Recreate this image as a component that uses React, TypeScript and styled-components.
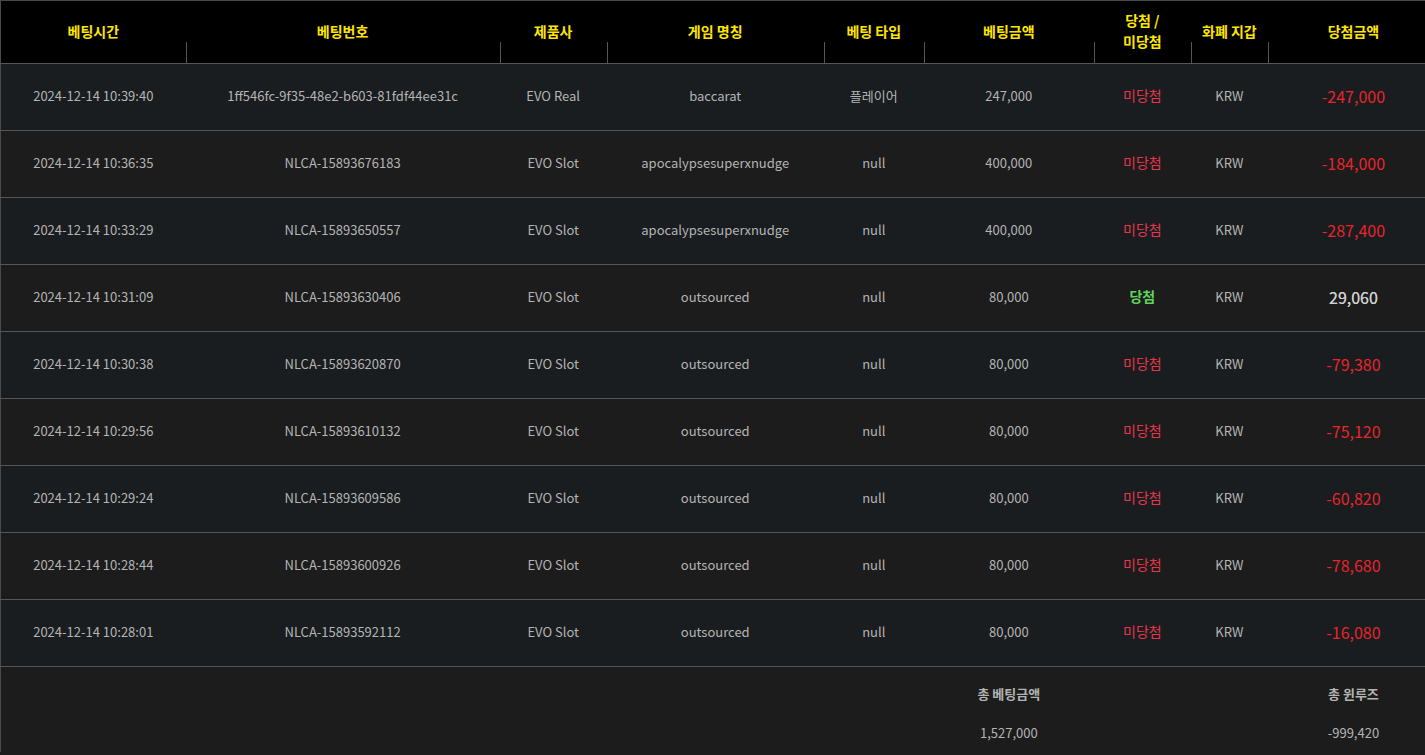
import React from "react";
import styled, { createGlobalStyle } from "styled-components";

const Global = createGlobalStyle`
  html, body { margin: 0; padding: 0; background: #1c1c1c; overflow-x: hidden; }
  body { font-family: "Noto Sans CJK KR", "Noto Sans", sans-serif; }
`;

const Table = styled.table`
  width: 1439px;
  border-collapse: collapse;
  table-layout: fixed;
  border-top: 1px solid #4a4a4a;
  border-left: 1px solid #4a4a4a;
  font-family: "Noto Sans CJK KR", "Noto Sans", sans-serif;
`;

const HeadRow = styled.tr`
  background: #000;
  border-bottom: 1px solid #555;
`;

const Th = styled.th<{ $sep?: boolean }>`
  position: relative;
  height: 60px;
  padding: 0 4px 2px;
  color: #ffe600;
  font-size: 14px;
  font-weight: 700;
  line-height: 21px;
  text-align: center;
  vertical-align: middle;
  &::after {
    content: "";
    display: ${(p) => (p.$sep ? "block" : "none")};
    position: absolute;
    left: 0;
    bottom: 0;
    width: 1px;
    height: 21px;
    background: #555;
  }
`;

const Row = styled.tr<{ $alt: boolean }>`
  background: ${(p) => (p.$alt ? "#1c1c1c" : "#1a1d1f")};
  border-bottom: 1px solid #555;
`;

const Td = styled.td`
  height: 62px;
  padding: 0 0 4px;
  color: #b4b4b4;
  font-size: 13px;
  text-align: center;
  vertical-align: middle;
  white-space: nowrap;
`;

const Result = styled.span<{ $win: boolean }>`
  font-size: 14px;
  font-weight: ${(p) => (p.$win ? 700 : 400)};
  color: ${(p) => (p.$win ? "#5fd35f" : "#e5364c")};
`;

const Amount = styled.span<{ $neg: boolean }>`
  display: inline-block;
  padding-top: 2px;
  font-size: 16px;
  font-weight: 400;
  color: ${(p) => (p.$neg ? "#e8242c" : "#d0d0d0")};
  text-shadow: ${(p) => (p.$neg ? "none" : "0 0 0.4px #d0d0d0")};
`;

const FootRow = styled.tr`
  background: #1c1c1c;
`;

const FootLabel = styled.td`
  padding: 16px 0 0;
  height: 20px;
  color: #b4b4b4;
  font-size: 13px;
  font-weight: 700;
  text-align: center;
  vertical-align: middle;
`;

const FootValue = styled.td`
  padding: 19px 0 10px;
  height: 20px;
  color: #b4b4b4;
  font-size: 13px;
  text-align: center;
  vertical-align: middle;
`;

const widths = [185, 314, 107, 217, 100, 170, 97, 77, 171];

const headers: React.ReactNode[] = [
  "베팅시간",
  "베팅번호",
  "제품사",
  "게임 명칭",
  "베팅 타입",
  "베팅금액",
  <>당첨 /<br />미당첨</>,
  "화폐 지갑",
  "당첨금액",
];

type Bet = {
  time: string;
  id: string;
  vendor: string;
  game: string;
  type: string;
  amount: string;
  win: boolean;
  result: string;
};

const rows: Bet[] = [
  { time: "2024-12-14 10:39:40", id: "1ff546fc-9f35-48e2-b603-81fdf44ee31c", vendor: "EVO Real", game: "baccarat", type: "플레이어", amount: "247,000", win: false, result: "-247,000" },
  { time: "2024-12-14 10:36:35", id: "NLCA-15893676183", vendor: "EVO Slot", game: "apocalypsesuperxnudge", type: "null", amount: "400,000", win: false, result: "-184,000" },
  { time: "2024-12-14 10:33:29", id: "NLCA-15893650557", vendor: "EVO Slot", game: "apocalypsesuperxnudge", type: "null", amount: "400,000", win: false, result: "-287,400" },
  { time: "2024-12-14 10:31:09", id: "NLCA-15893630406", vendor: "EVO Slot", game: "outsourced", type: "null", amount: "80,000", win: true, result: "29,060" },
  { time: "2024-12-14 10:30:38", id: "NLCA-15893620870", vendor: "EVO Slot", game: "outsourced", type: "null", amount: "80,000", win: false, result: "-79,380" },
  { time: "2024-12-14 10:29:56", id: "NLCA-15893610132", vendor: "EVO Slot", game: "outsourced", type: "null", amount: "80,000", win: false, result: "-75,120" },
  { time: "2024-12-14 10:29:24", id: "NLCA-15893609586", vendor: "EVO Slot", game: "outsourced", type: "null", amount: "80,000", win: false, result: "-60,820" },
  { time: "2024-12-14 10:28:44", id: "NLCA-15893600926", vendor: "EVO Slot", game: "outsourced", type: "null", amount: "80,000", win: false, result: "-78,680" },
  { time: "2024-12-14 10:28:01", id: "NLCA-15893592112", vendor: "EVO Slot", game: "outsourced", type: "null", amount: "80,000", win: false, result: "-16,080" },
];

export default function App() {
  return (
    <>
      <Global />
      <Table>
        <colgroup>
          {widths.map((w, i) => (
            <col key={i} style={{ width: w }} />
          ))}
        </colgroup>
        <thead>
          <HeadRow>
            {headers.map((h, i) => (
              <Th key={i} $sep={i > 0}>
                {h}
              </Th>
            ))}
          </HeadRow>
        </thead>
        <tbody>
          {rows.map((r, i) => (
            <Row key={r.id} $alt={i % 2 === 1}>
              <Td>{r.time}</Td>
              <Td>{r.id}</Td>
              <Td>{r.vendor}</Td>
              <Td>{r.game}</Td>
              <Td>{r.type}</Td>
              <Td>{r.amount}</Td>
              <Td>
                <Result $win={r.win}>{r.win ? "당첨" : "미당첨"}</Result>
              </Td>
              <Td>KRW</Td>
              <Td>
                <Amount $neg={!r.win}>{r.result}</Amount>
              </Td>
            </Row>
          ))}
        </tbody>
        <tfoot>
          <FootRow>
            <FootLabel colSpan={5} />
            <FootLabel>총 베팅금액</FootLabel>
            <FootLabel colSpan={2} />
            <FootLabel>총 윈루즈</FootLabel>
          </FootRow>
          <FootRow>
            <FootValue colSpan={5} />
            <FootValue>1,527,000</FootValue>
            <FootValue colSpan={2} />
            <FootValue>-999,420</FootValue>
          </FootRow>
        </tfoot>
      </Table>
    </>
  );
}
